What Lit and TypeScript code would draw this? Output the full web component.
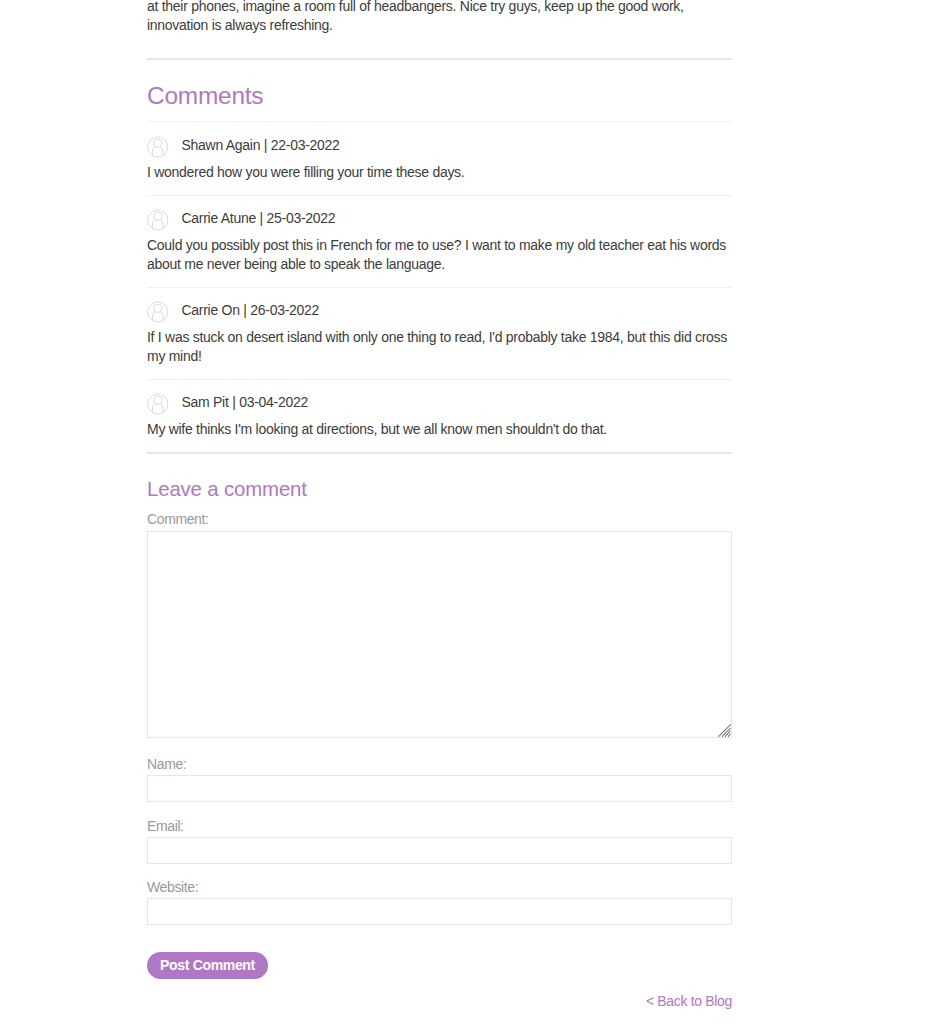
import { LitElement, html, css } from "lit";
import { customElement, property } from "lit/decorators.js";

interface Comment {
  author: string;
  date: string;
  lines: string[];
}

const comments: Comment[] = [
  { author: "Shawn Again", date: "22-03-2022", lines: ["I wondered how you were filling your time these days."] },
  {
    author: "Carrie Atune",
    date: "25-03-2022",
    lines: [
      "Could you possibly post this in French for me to use? I want to make my old teacher eat his words",
      "about me never being able to speak the language.",
    ],
  },
  {
    author: "Carrie On",
    date: "26-03-2022",
    lines: [
      "If I was stuck on desert island with only one thing to read, I'd probably take 1984, but this did cross",
      "my mind!",
    ],
  },
  { author: "Sam Pit", date: "03-04-2022", lines: ["My wife thinks I'm looking at directions, but we all know men shouldn't do that."] },
];

@customElement("blog-comment")
export class BlogComment extends LitElement {
  @property({ attribute: false }) comment!: Comment;

  static styles = css`
    :host {
      display: block;
      box-sizing: border-box;
      border-top: 1px solid #f0f0f1;
      padding-top: 13.5px;
      height: 73.6px;
    }
    :host(.long) {
      height: 92px;
    }
    .head {
      display: flex;
      height: 27.4px;
      gap: 13px;
    }
    .avatar {
      width: 21.5px;
      height: 22px;
      flex: none;
    }
    .meta {
      line-height: 19px;
    }
    .line {
      line-height: 19px;
      white-space: nowrap;
    }
  `;

  render() {
    const { author, date, lines } = this.comment;
    return html`
      <div class="head">
        <svg class="avatar" viewBox="0 0 22 22" fill="none" stroke="#d6dada" stroke-width="1">
          <circle cx="11" cy="11" r="10.3" />
          <circle cx="11" cy="7.2" r="4.1" />
          <path d="M5.6 19.8v-3.6c0-3.2 1.2-4.9 3-5.6M16.4 19.8v-3.6c0-3.2-1.2-4.9-3-5.6" />
        </svg>
        <span class="meta">${author} | ${date}</span>
      </div>
      ${lines.map((l) => html`<div class="line">${l}</div>`)}
    `;
  }
}

@customElement("app-root")
export class AppRoot extends LitElement {
  static styles = css`
    :host {
      display: block;
      height: 1024px;
      overflow: hidden;
      background: #fff;
      color: #3c3c3b;
      font: 14px/19px "Liberation Sans", Arial, sans-serif;
      letter-spacing: -0.28px;
    }
    .page {
      width: 585px;
      margin-left: 147px;
    }
    .article {
      margin-top: -3px;
      height: 61px;
      white-space: nowrap;
    }
    .rule {
      height: 2px;
      background: #e6e6e6;
    }
    h1,
    h2 {
      margin: 0;
      font-weight: 400;
      color: #b077c4;
    }
    h1 {
      font-size: 24.4px;
      line-height: 28px;
      padding: 22px 0 11px;
      letter-spacing: -0.2px;
    }
    h2 {
      font-size: 20.4px;
      line-height: 24px;
      padding: 23px 0 9px;
      letter-spacing: -0.15px;
    }
    label {
      display: block;
      color: #999;
      height: 20px;
      letter-spacing: -0.38px;
    }
    .first {
      height: 21px;
    }
    .box {
      display: block;
      box-sizing: border-box;
      width: 585px;
      margin: 0;
      padding: 2px;
      border: 1px solid #e6e6e6;
      border-radius: 0;
      background: #fff;
      outline: none;
      font: inherit;
      resize: none;
    }
    .area {
      height: 207px;
    }
    .field {
      height: 27px;
      margin-bottom: 14.4px;
    }
    .area-wrap {
      position: relative;
      margin-bottom: 17px;
    }
    .grip {
      position: absolute;
      right: 1px;
      bottom: 1px;
      width: 13px;
      height: 13px;
    }
    .post {
      display: block;
      margin: 27px 0 13px;
      padding: 0;
      width: 121px;
      height: 27px;
      border: 0;
      border-radius: 14px;
      background: #b077c4;
      color: #fff;
      font: bold 14px/27px "Liberation Sans", Arial, sans-serif;
      letter-spacing: -0.33px;
    }
    .back {
      display: block;
      text-align: right;
      color: #b077c4;
      text-decoration: none;
      letter-spacing: -0.33px;
    }
  `;

  render() {
    return html`
      <main class="page">
        <div class="article">
          at their phones, imagine a room full of headbangers. Nice try guys, keep up the good work,<br />innovation is
          always refreshing.
        </div>
        <div class="rule"></div>
        <h1>Comments</h1>
        ${comments.map((c) => html`<blog-comment class=${c.lines.length > 1 ? "long" : ""} .comment=${c}></blog-comment>`)}
        <div class="rule"></div>
        <h2>Leave a comment</h2>
        <label class="first" for="comment">Comment:</label>
        <div class="area-wrap">
          <textarea id="comment" class="box area"></textarea>
          <svg class="grip" viewBox="0 0 13 13" stroke="#555" stroke-width="1.1" stroke-dasharray="1.3 .3">
            <path d="M.5 12.5l12-12M4 12.5L12.5 4M7 12.5L12.5 7M10 12.5l2.500-2.500" fill="none" />
          </svg>
        </div>
        <label for="name">Name:</label>
        <input id="name" class="box field" />
        <label for="email">Email:</label>
        <input id="email" class="box field" />
        <label for="website">Website:</label>
        <input id="website" class="box field" />
        <button class="post">Post Comment</button>
        <a class="back" href="#">&lt; Back to Blog</a>
      </main>
    `;
  }
}
